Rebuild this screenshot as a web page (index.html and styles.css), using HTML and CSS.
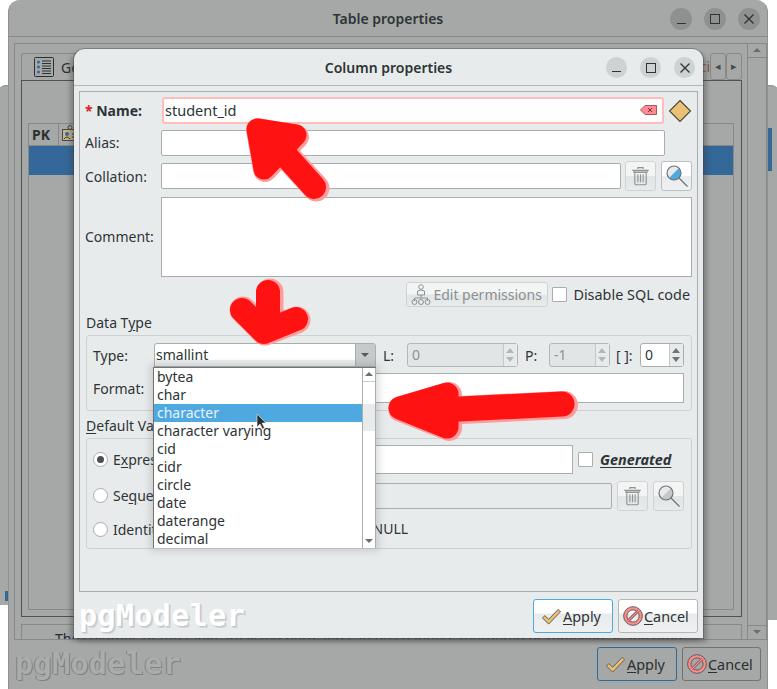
FILE: index.html
```html
<!DOCTYPE html>
<html lang="en">
<head>
    <meta charset="UTF-8">
    <meta name="viewport" content="width=device-width, initial-scale=1.0">
    <title>Column properties</title>
    <link rel="stylesheet" href="styles.css">
</head>
<body>
    <svg class="defs" width="0" height="0">
        <symbol id="i-trash" viewBox="0 0 24 24">
            <path d="M9 4V2.500h6V4M2.500 5.500h19M4.500 6v1.500h15V6M5.500 8v12.500q0 1.500 1.500 1.500h10q1.500 0 1.500-1.500V8z" fill="none" stroke="currentColor" stroke-width="1.300"/>
            <path d="M9 10v9M12 10v9M15 10v9" stroke="currentColor" stroke-width="1.300"/>
        </symbol>
        <symbol id="i-search" viewBox="0 0 24 24">
            <circle cx="9" cy="9" r="7" fill="currentColor"/>
            <path d="M4 14 14 4A7 7 0 0 0 4 14z" fill="#e8ebec"/>
            <circle cx="9" cy="9" r="7" fill="none" stroke="#6d7273" stroke-width="1.200"/>
            <path d="M14 14l8.500 8.500" stroke="#6d7273" stroke-width="1.300"/>
        </symbol>
        <symbol id="i-check" viewBox="0 0 22 20">
            <path d="M1.500 11.500 4 9l4 4L18 2.500l2.500 2.500L8 18z" fill="#e8bf73" stroke="#5d5a52" stroke-width="1"/>
        </symbol>
        <symbol id="i-cancel" viewBox="0 0 22 22">
            <circle cx="11" cy="11" r="8.500" fill="none" stroke="#ff8a8a" stroke-width="3.500"/>
            <circle cx="11" cy="11" r="10.300" fill="none" stroke="#555" stroke-width="1"/>
            <circle cx="11" cy="11" r="6.700" fill="none" stroke="#555" stroke-width="1"/>
            <path d="M5 17 17 5" stroke="#ff8a8a" stroke-width="3.500"/>
            <path d="M4.500 16 16 4.500M6 17.500 17.500 6" stroke="#555" stroke-width="1"/>
        </symbol>
    </svg>

    <div class="win-behind win-behind-left"><span class="behind-blue"></span></div>
    <div class="win-behind win-behind-right"><span class="behind-blue"></span></div>

    <!-- Janela de tras, escurecida -->
    <div class="win win-back">
        <div class="titlebar titlebar-back">
            <span class="win-title">Table properties</span>
            <div class="win-btns">
                <span class="win-btn"><i class="ic-min"></i></span>
                <span class="win-btn"><i class="ic-max"></i></span>
                <span class="win-btn"><svg width="12" height="12" viewBox="0 0 12 12"><path d="M1.500 1.500l9 9M10.500 1.500l-9 9" stroke="#2e3232" stroke-width="1.300"/></svg></span>
            </div>
        </div>
        <div class="back-frame">
            <div class="back-content">
                <div class="back-tabs">
                    <div class="back-tab">
                        <svg width="20" height="20" viewBox="0 0 20 20"><rect x="0.500" y="0.500" width="19" height="19" rx="1" fill="none" stroke="#2b2f2f"/><circle cx="4.500" cy="5" r="1.500" fill="#336899"/><circle cx="4.500" cy="10" r="1.500" fill="#336899"/><circle cx="4.500" cy="15" r="1.500" fill="#336899"/><path d="M8 4h9M8 6.500h9M8 9h9M8 11.500h9M8 14h9M8 16.500h9" stroke="#2b2f2f"/></svg>
                        <span>General</span>
                    </div>
                    <span class="back-tab-end">ci</span>
                    <span class="tab-scroll">◂</span>
                    <span class="tab-scroll">▸</span>
                </div>
                <div class="back-panel">
                    <div class="back-table">
                        <div class="back-thead">
                            <span class="th-pk">PK</span>
                            <span class="th-icon">
                                <svg width="16" height="18" viewBox="0 0 16 18"><rect x="0.500" y="4.500" width="15" height="11" fill="#c8b48c" stroke="#4a4a44"/><circle cx="5" cy="9" r="2" fill="#336899"/><path d="M2 14q3-4 6 0M10 9h4M10 12h4" stroke="#333" fill="none"/><circle cx="8" cy="2.500" r="2" fill="none" stroke="#444"/></svg>
                            </span>
                        </div>
                        <div class="back-row"></div>
                    </div>
                </div>
                <div class="back-note">The columns of the table are listed here and can be changed, reordered or removed at any time</div>
            </div>
            <div class="back-scroll">
                <span class="sb-up"></span>
                <span class="sb-down"></span>
            </div>
        </div>
        <div class="footer footer-back">
            <span class="logo logo-back">pgModeler</span>
            <button class="btn btn-back btn-focus"><svg width="21" height="19"><use href="#i-check"/></svg><span><u>A</u>pply</span></button>
            <button class="btn btn-back btn-back-cancel"><svg width="20" height="20"><use href="#i-cancel"/></svg><span><u>C</u>ancel</span></button>
        </div>
    </div>

    <!-- Dialogo da coluna -->
    <div class="win win-front">
        <div class="titlebar">
            <span class="win-title">Column properties</span>
            <div class="win-btns win-btns-front">
                <span class="win-btn"><i class="ic-min"></i></span>
                <span class="win-btn"><i class="ic-max"></i></span>
                <span class="win-btn"><svg width="12" height="12" viewBox="0 0 12 12"><path d="M1.500 1.500l9 9M10.500 1.500l-9 9" stroke="#2e3436" stroke-width="1.300"/></svg></span>
            </div>
        </div>
        <div class="dialog-body">
            <div class="panel">
                <div class="row row-name">
                    <label class="lbl lbl-req"><em>*</em> Name:</label>
                    <div class="input input-name">
                        <span>student_id</span>
                        <svg width="17" height="10" viewBox="0 0 17 10"><path d="M5 .5h11.500v9H5L.5 5z" fill="#ff8a93" stroke="#a05a60"/><path d="M8 3l4 4M12 3l-4 4" stroke="#703a3e"/></svg>
                    </div>
                    <svg class="diamond" width="24" height="24" viewBox="0 0 24 24"><path d="M12 1.500 22.500 12 12 22.500 1.500 12z" fill="#e9c277" stroke="#4a4436" stroke-width="1.100"/></svg>
                </div>
                <div class="row row-alias">
                    <label class="lbl">Alias:</label>
                    <div class="input input-alias"></div>
                </div>
                <div class="row row-coll">
                    <label class="lbl">Collation:</label>
                    <div class="input input-coll"></div>
                    <button class="tool tool-off"><svg width="21" height="22"><use href="#i-trash"/></svg></button>
                    <button class="tool tool-search"><svg width="24" height="24"><use href="#i-search"/></svg></button>
                </div>
                <div class="row row-comment">
                    <label class="lbl">Comment:</label>
                    <div class="input input-comment"></div>
                </div>
                <div class="row row-perms">
                    <button class="btn-perm">
                        <svg width="20" height="21" viewBox="0 0 20 21"><circle cx="10" cy="3" r="2.300" fill="none" stroke="#8e9293"/><path d="M6.500 11V7q3.500-2 7 0v4zM10 11v3M3.500 17v-3h13v3" fill="none" stroke="#8e9293"/><circle cx="3.500" cy="18" r="2.500" fill="none" stroke="#8e9293"/><circle cx="10" cy="18" r="2.500" fill="none" stroke="#8e9293"/><circle cx="16.500" cy="18" r="2.500" fill="none" stroke="#8e9293"/></svg>
                        <span>Edit permissions</span>
                    </button>
                    <span class="check"></span>
                    <span class="check-text">Disable SQL code</span>
                </div>

                <div class="group-title">Data T<u>y</u>pe</div>
                <div class="group group-type">
                    <div class="g-row g-row-type">
                        <span class="g-lbl">Type:</span>
                        <div class="combo">
                            <span>smallint</span>
                            <span class="combo-arrow"></span>
                        </div>
                        <span class="spin-lbl">L:</span>
                        <div class="spin spin-l spin-off"><span>0</span><b></b></div>
                        <span class="spin-lbl">P:</span>
                        <div class="spin spin-p spin-off"><span>-1</span><b></b></div>
                        <span class="spin-lbl spin-lbl-arr">[ ]:</span>
                        <div class="spin spin-a"><span>0</span><b></b></div>
                    </div>
                    <div class="g-row g-row-format">
                        <span class="g-lbl">Format:</span>
                        <div class="input input-flex"></div>
                    </div>
                </div>

                <div class="group-title group-title-def"><u>D</u>efault Value</div>
                <div class="group group-def">
                    <div class="g-row g-row-expr">
                        <span class="radio radio-on"></span>
                        <span class="radio-text">E<u>x</u>pression:</span>
                        <div class="input input-expr"></div>
                        <span class="check"></span>
                        <span class="generated">Generated</span>
                    </div>
                    <div class="g-row g-row-seq">
                        <span class="radio"></span>
                        <span class="radio-text">Se<u>q</u>uence:</span>
                        <div class="input input-seq"></div>
                        <button class="tool tool-off"><svg width="21" height="22"><use href="#i-trash"/></svg></button>
                        <button class="tool tool-off tool-search-off"><svg width="24" height="24"><use href="#i-search"/></svg></button>
                    </div>
                    <div class="g-row g-row-ident">
                        <span class="radio"></span>
                        <span class="radio-text">Identity:</span>
                        <span class="not-null">NOT NULL</span>
                    </div>
                </div>
            </div>
            <div class="footer">
                <span class="logo">pgModeler</span>
                <button class="btn btn-focus"><svg width="21" height="19"><use href="#i-check"/></svg><span><u>A</u>pply</span></button>
                <button class="btn"><svg width="20" height="20"><use href="#i-cancel"/></svg><span><u>C</u>ancel</span></button>
            </div>
        </div>

        <!-- Lista aberta do combo -->
        <div class="popup">
            <ul class="popup-list">
                <li>bytea</li>
                <li>char</li>
                <li class="active">character</li>
                <li>character varying</li>
                <li>cid</li>
                <li>cidr</li>
                <li>circle</li>
                <li>date</li>
                <li>daterange</li>
                <li>decimal</li>
            </ul>
            <div class="popup-scroll">
                <span class="ps-up"></span>
                <span class="ps-thumb"></span>
                <span class="ps-down"></span>
            </div>
        </div>
    </div>

    <!-- Setas vermelhas desenhadas por cima -->
    <svg class="scribble" width="777" height="689" viewBox="0 0 777 689">
        <g fill="none" stroke="#ff9c9c" stroke-linecap="round" stroke-linejoin="round">
            <path d="M316 188 272 140" stroke-width="27"/>
            <path d="M258 130 297 137 265 170z" fill="#ff9c9c" stroke-width="24"/>
            <path d="M270 292V325M243 310 265 332M297 320 265 332" stroke-width="27"/>
            <path d="M440 411 564 405" stroke-width="28"/>
            <path d="M401 409 449 395V428z" fill="#ff9c9c" stroke-width="26"/>
        </g>
        <g fill="none" stroke="#ff1212" stroke-linecap="round" stroke-linejoin="round">
            <path d="M314 187 270 138" stroke-width="24"/>
            <path d="M257 129 296 135 264 169z" fill="#ff1212" stroke-width="21"/>
            <path d="M268 292V325M242 310 264 332M296 319 264 332" stroke-width="24"/>
            <path d="M440 410 562 404" stroke-width="25"/>
            <path d="M400 408 447 394V427z" fill="#ff1212" stroke-width="23"/>
        </g>
        <path d="M257 414v13l3-3 2.500 5 2-1-2.500-5h4z" fill="#2b2f30" stroke="#eee" stroke-width="0.600"/>
    </svg>
</body>
</html>
```

FILE: styles.css
```css
* {
    box-sizing: border-box;
}
html, body {
    height: 100%;
}
body {
    margin: 0;
    background: #fff;
    color: #2e3436;
    font-family: "Noto Sans", sans-serif;
    font-size: 14px;
    overflow: hidden;
    position: relative;
}
.defs {
    position: absolute;
}
button {
    font: inherit;
    color: inherit;
    padding: 0;
    cursor: default;
}
u {
    text-underline-offset: 2px;
}

/* janelas */
.win-behind {
    position: absolute;
    top: 85px;
    width: 12px;
    background: #a5a8a7;
    border-top: 1px solid #8c8f8e;
}
.win-behind-left {
    left: -2px;
    height: 520px;
    border-radius: 8px 0 0 0;
}
.win-behind-right {
    right: -2px;
    height: 535px;
    border-radius: 0 8px 0 0;
}
.behind-blue {
    position: absolute;
    background: #336899;
}
.win-behind-left .behind-blue {
    left: 7px;
    top: 505px;
    width: 3px;
    height: 10px;
}
.win-behind-right .behind-blue {
    left: 1px;
    top: 42px;
    width: 4px;
    height: 43px;
}
.win {
    position: absolute;
    display: flex;
    flex-direction: column;
}
.win-back {
    left: 8px;
    top: 0;
    width: 760px;
    height: 689px;
    background: #a5a8a7;
    border-radius: 12px 12px 0 0;
    color: #2b2f2f;
    border-right: 1px solid #8f9291;
    border-left: 1px solid #8f9291;
}
.win-front {
    left: 74px;
    top: 49px;
    width: 629px;
    height: 589px;
    background: #e8ebec;
    border-radius: 11px 11px 0 0;
    box-shadow: 0 0 0 1px rgba(60,60,60,.35), -4px 3px 4px rgba(60,60,60,.35), 4px 4px 4px rgba(60,60,60,.35);
}
.titlebar {
    flex: none;
    height: 37px;
    display: flex;
    align-items: center;
    justify-content: center;
    position: relative;
    border-bottom: 1px solid #b3b7b8;
}
.titlebar-back {
    border-bottom-color: #868988;
}
.win-title {
    font-weight: 600;
    font-size: 14px;
    color: #2e3436;
}
.win-btns {
    position: absolute;
    right: 7px;
    top: 8px;
    display: flex;
    gap: 12px;
}
.win-btns-front {
    right: 8px;
    top: 8px;
    gap: 13px;
}
.win-btn {
    width: 22px;
    height: 22px;
    border-radius: 50%;
    background: #8e9190;
    display: flex;
    align-items: center;
    justify-content: center;
}
.win-btns-front .win-btn {
    width: 21px;
    height: 21px;
    background: #cdd2d3;
}
.ic-min {
    width: 9px;
    height: 1px;
    margin-top: 8px;
    background: #2e3436;
    display: block;
}
.ic-max {
    width: 10px;
    height: 10px;
    border: 1.300px solid #2e3436;
    display: block;
}

/* conteudo de tras */
.back-frame {
    margin: 6px 0 0 5px;
    height: 597px;
    display: flex;
    border: 1px solid #868988;
    border-bottom: 1px solid #868988;
}
.back-content {
    flex: 1;
    padding: 9px 0 0 6px;
    min-width: 0;
    overflow: hidden;
}
.back-tabs {
    height: 27px;
    display: flex;
    align-items: stretch;
}
.back-tab {
    width: 130px;
    display: flex;
    align-items: center;
    gap: 7px;
    padding-left: 12px;
    border: 1px solid #868988;
    border-bottom: none;
    border-radius: 3px 3px 0 0;
}
.back-tab-end {
    margin-left: auto;
    padding-top: 4px;
    color: #8a5a3c;
}
.tab-scroll {
    width: 16px;
    border: 1px solid #868988;
    border-radius: 3px;
    font-size: 11px;
    color: #4a4d4d;
    text-align: center;
    line-height: 24px;
}
.back-panel {
    height: 537px;
    width: 721px;
    padding: 42px 7px 6px;
    border: 1px solid #4f5252;
}
.back-table {
    height: 100%;
    border: 1px solid #868988;
    border-top: none;
    margin-left: -1px;
}
.back-thead {
    height: 23px;
    display: flex;
    border: 1px solid #868988;
    border-width: 1px 0;
    margin-right: -1px;
}
.th-pk {
    width: 30px;
    padding-left: 3px;
    font-weight: 700;
    line-height: 21px;
    border-right: 1px solid #868988;
}
.th-icon {
    width: 30px;
    padding: 1px 0 0 3px;
}
.back-row {
    height: 29px;
    background: #336899;
    margin-right: 0;
}
.back-note {
    margin-top: 7px;
    width: 721px;
    height: 30px;
    padding: 4px 0 0 33px;
    border: 1px solid #868988;
    border-bottom: none;
    color: #1f2a33;
    white-space: nowrap;
    overflow: hidden;
}
.back-scroll {
    width: 19px;
    margin-left: 5px;
    position: relative;
    border-left: 1px solid #868988;
}
.sb-up {
    position: absolute;
    left: 0;
    top: 0;
    width: 100%;
    height: 14px;
    border-bottom: 1px solid #868988;
}
.sb-up::after, .sb-down::after, .ps-up::after, .ps-down::after {
    content: "";
    position: absolute;
    left: 50%;
    margin-left: -4px;
    border-left: 4px solid transparent;
    border-right: 4px solid transparent;
}
.sb-up::after {
    top: 4px;
    border-bottom: 4px solid #6b6e6e;
}
.sb-down {
    position: absolute;
    left: 0;
    bottom: 0;
    width: 100%;
    height: 14px;
    border-top: 1px solid #868988;
}
.sb-down::after {
    top: 4px;
    border-top: 4px solid #6b6e6e;
}
.footer-back {
    margin: 8px 6px 0 6px;
    gap: 5px;
}

/* dialogo */
.dialog-body {
    padding: 5px 5px 0;
    flex: 1;
}
.panel {
    height: 501px;
    padding: 0 5px 0 6px;
    border: 1px solid #a9adae;
}
.row {
    display: flex;
    align-items: center;
}
.lbl {
    width: 75px;
    flex: none;
    margin-top: -2px;
    position: relative;
    left: -1px;
}
.lbl-req, .row-coll .lbl {
    margin-top: 0;
}
.lbl-req {
    font-weight: 700;
    white-space: nowrap;
}
.lbl-req em {
    color: #e0201c;
    font-style: normal;
}
.input {
    background: #fff;
    border: 1px solid #a9adae;
    border-radius: 2px;
    height: 100%;
}
.row-name {
    height: 27px;
    margin-top: 5px;
}
.input-name {
    width: 502px;
    margin-left: 1px;
    border: 2px solid #ffbcbc;
    border-radius: 3px;
    display: flex;
    align-items: center;
    justify-content: space-between;
    padding: 0 5px 2px 1px;
    font-size: 14.500px;
}
.diamond {
    margin-left: 4px;
}
.row-alias {
    height: 26px;
    margin-top: 6px;
}
.input-alias {
    width: 504px;
}
.row-coll {
    height: 30px;
    margin-top: 5px;
}
.input-coll {
    width: 460px;
    height: 26px;
}
.tool {
    width: 31px;
    height: 30px;
    border: 1px solid #bcc0c1;
    border-radius: 3px;
    background: linear-gradient(#fff 0, #fff 48%, #e8ebec 52%, #eff1f1 100%);
    display: flex;
    align-items: center;
    justify-content: center;
    color: #8e9293;
}
.row-coll .tool-off {
    margin-left: 4px;
}
.tool-off {
    background: linear-gradient(#f3f5f5 0, #f3f5f5 48%, #e2e5e6 52%, #e8ebec 100%);
    border-color: #cfd3d4;
}
.tool-search {
    margin-left: 5px;
    color: #4fa8e0;
}
.tool-search-off {
    margin-left: 5px;
    color: #c5c9ca;
}
.row-comment {
    height: 80px;
    margin-top: 6px;
}
.input-comment {
    width: 531px;
    border-radius: 0;
}
.row-perms {
    height: 25px;
    margin-top: 5px;
    justify-content: flex-end;
}
.btn-perm {
    width: 142px;
    height: 25px;
    margin-right: -1px;
    border: 1px solid #cfd3d4;
    border-radius: 3px;
    background: linear-gradient(#f3f5f5 0, #f3f5f5 48%, #e2e5e6 52%, #e8ebec 100%);
    color: #8b9092;
    display: flex;
    align-items: center;
    gap: 2px;
    padding-left: 4px;
    white-space: nowrap;
}
.check {
    width: 15px;
    height: 15px;
    flex: none;
    background: #fff;
    border: 1px solid #a9adae;
    border-radius: 1px;
}
.row-perms .check {
    margin-left: 5px;
}
.check-text {
    margin: 0 2px 0 6px;
    white-space: nowrap;
    font-size: 14.400px;
}
.group-title {
    height: 16px;
    line-height: 16px;
    margin-top: 8px;
}
.group-title-def {
    margin-top: 7px;
}
.group {
    margin-top: 4px;
    width: 606px;
    padding: 7px 7px 0 6px;
    border: 1px solid #cdd1d2;
    border-radius: 3px;
}
.group-type {
    height: 76px;
}
.group-def {
    height: 111px;
    padding-top: 6px;
}
.g-row {
    display: flex;
    align-items: center;
}
.g-lbl {
    width: 61px;
    flex: none;
}
.g-row-type {
    height: 24px;
}
.combo {
    width: 222px;
    height: 24px;
    flex: none;
    display: flex;
    justify-content: space-between;
    border: 1px solid #a9adae;
    border-radius: 3px 3px 0 0;
    background: linear-gradient(#fff 0, #fff 70%, #eceeef 75%, #eceeef 100%);
    padding-left: 1px;
    line-height: 22px;
}
.combo-arrow {
    width: 20px;
    background: #c6cacb;
    border-left: 1px solid #a9adae;
    position: relative;
}
.combo-arrow::after {
    content: "";
    position: absolute;
    left: 5px;
    top: 9px;
    border-left: 4px solid transparent;
    border-right: 4px solid transparent;
    border-top: 4px solid #555a5b;
}
.spin-lbl {
    width: 24px;
    margin-left: 7px;
    flex: none;
}
.spin-lbl-arr {
    margin-left: 6px;
}
.spin {
    height: 24px;
    flex: none;
    display: flex;
    justify-content: space-between;
    border: 1px solid #a9adae;
    border-radius: 3px;
    background: #fff;
    padding-left: 4px;
    line-height: 22px;
}
.spin b {
    width: 14px;
    border-left: 1px solid #c4c8c9;
    background: linear-gradient(#e8ebec 0, #e8ebec 48%, #d8dcdd 50%, #e8ebec 54%);
    position: relative;
}
.spin b::before, .spin b::after {
    content: "";
    position: absolute;
    left: 2px;
    border-left: 4px solid transparent;
    border-right: 4px solid transparent;
}
.spin b::before {
    top: 4px;
    border-bottom: 5px solid #6f7475;
}
.spin b::after {
    bottom: 4px;
    border-top: 5px solid #6f7475;
}
.spin-off {
    background: #e2e5e6;
    color: #8e9293;
    border-color: #b3b7b8;
}
.spin-off b::before {
    border-bottom-color: #b3b7b8;
}
.spin-off b::after {
    border-top-color: #b3b7b8;
}
.spin-l {
    width: 111px;
}
.spin-p {
    width: 61px;
}
.spin-a {
    width: 44px;
}
.g-row-format {
    height: 30px;
    margin-top: 6px;
}
.input-flex {
    flex: 1;
    border-radius: 0;
}
.radio {
    width: 15px;
    height: 15px;
    flex: none;
    border: 1px solid #a9adae;
    border-radius: 50%;
    background: #fff;
    position: relative;
}
.radio-on::after {
    content: "";
    position: absolute;
    left: 3px;
    top: 3px;
    width: 7px;
    height: 7px;
    border-radius: 50%;
    background: #4a4f50;
}
.radio-text {
    width: 46px;
    margin-left: 5px;
    flex: none;
    white-space: nowrap;
    overflow: hidden;
}
.g-row-expr {
    height: 29px;
}
.input-expr {
    width: 414px;
    margin-right: 5px;
    border-radius: 0;
}
.generated {
    margin-left: 7px;
    font-weight: 700;
    font-style: italic;
    font-size: 14.400px;
    text-decoration: underline;
    text-underline-offset: 2px;
    white-space: nowrap;
}
.g-row-seq {
    height: 31px;
    margin-top: 6px;
}
.input-seq {
    width: 453px;
    height: 26px;
    margin-right: 5px;
    background: #e8ebec;
}
.g-row-ident {
    height: 20px;
    margin-top: 8px;
}
.not-null {
    margin-left: 181px;
    white-space: nowrap;
    position: relative;
    top: -1px;
}

/* rodape */
.footer {
    height: 34px;
    margin-top: 7px;
    display: flex;
    align-items: center;
    justify-content: flex-end;
    gap: 5px;
}
.btn {
    width: 80px;
    height: 34px;
    flex: none;
    display: flex;
    align-items: center;
    gap: 1px;
    padding-left: 4px;
    border: 1px solid #b3b7b8;
    border-radius: 3px;
    background: linear-gradient(#fff 0, #fff 40%, #e8ebec 44%, #eff1f1 100%);
    font-size: 14.400px;
}
.btn-focus {
    border-color: #4fa8e0;
    padding-left: 7px;
}
.btn-back {
    background: #a5a8a7;
    border-color: #6f7271;
}
.btn-back.btn-focus {
    border-color: #2c6a99;
}
.btn-back-cancel {
    width: 79px;
}
.logo {
    margin-right: auto;
    font-family: "DejaVu Sans Mono", monospace;
    font-size: 30px;
    font-weight: 700;
    letter-spacing: .4px;
    line-height: 34px;
    color: #fff;
    text-shadow: 1px 1px 0 #c3c7c8, 2px 2px 0 #d2d5d6;
}
.logo-back {
    color: #aaadac;
    text-shadow: 1px 1px 0 #7e8180, -1px 0 0 #7e8180;
}

/* popup do combo */
.popup {
    position: absolute;
    left: 79px;
    top: 318px;
    width: 223px;
    height: 181px;
    display: flex;
    background: #fff;
    border: 1px solid #6f7475;
    border-width: 1px 0 0 1px;
    box-shadow: 0 0 7px 3px rgba(90,95,96,.22);
}
.popup-list {
    list-style: none;
    margin: 0;
    padding: 0;
    flex: 1;
}
.popup-list li {
    height: 18px;
    line-height: 18px;
    padding-left: 3px;
    white-space: nowrap;
}
.popup-list .active {
    background: #4fa9e1;
    color: #e8f3fa;
}
.popup-scroll {
    width: 14px;
    border-left: 1px solid #a9adae;
    border-right: 1px solid #a9adae;
    position: relative;
}
.ps-up, .ps-down {
    position: absolute;
    left: 0;
    width: 100%;
    height: 14px;
}
.ps-up {
    top: 0;
    border-bottom: 1px solid #c9cdce;
}
.ps-down {
    bottom: 0;
}
.ps-up::after {
    top: 4px;
    border-bottom: 4px solid #6b6e6e;
}
.ps-down::after {
    top: 5px;
    border-top: 4px solid #6b6e6e;
}
.ps-thumb {
    position: absolute;
    left: 0;
    top: 36px;
    width: 100%;
    height: 27px;
    background: #e8ebec;
}

.scribble {
    position: absolute;
    left: 0;
    top: 0;
    pointer-events: none;
}
```
